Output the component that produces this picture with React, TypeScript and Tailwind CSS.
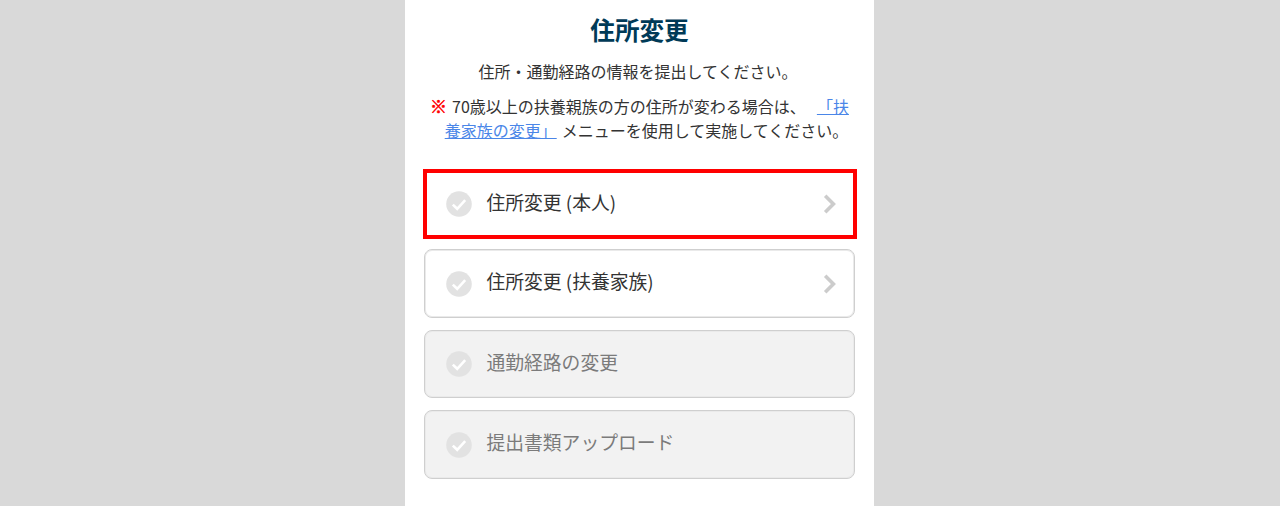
const font = { fontFamily: '"Noto Sans CJK JP", "Liberation Sans", sans-serif' };

interface MenuItemProps {
  label: string;
  active?: boolean;
  disabled?: boolean;
  className?: string;
}

function CheckCircle() {
  return (
    <svg width="26" height="26" viewBox="0 0 26 26" className="shrink-0">
      <circle cx="13" cy="13" r="12.8" fill="#e2e2e2" />
      <path d="M6.8 13.6l4.4 4.2 8-8.6" fill="none" stroke="#fff" strokeWidth="2.6" />
    </svg>
  );
}

function Chevron() {
  return (
    <svg width="14" height="20" viewBox="0 0 14 20" className="shrink-0">
      <path d="M2.2 1.8l8.2 8.2-8.2 8.2" fill="none" stroke="#cccccc" strokeWidth="3.6" />
    </svg>
  );
}

function MenuItem({ label, active, disabled, className }: MenuItemProps) {
  const edge = "border border-[#cfcfcf] rounded-lg shadow-[inset_0_0_0_1px_#eaeaea]";
  let box = `${edge} bg-white text-[#333333]`;
  if (active) box = "border-[4px] border-[#ff0000] bg-white text-[#333333]";
  if (disabled) box = `${edge} bg-[#f2f2f2] text-[#7b7b7b]`;
  return (
    <div className={`flex items-center justify-between ${box} ${className ?? ""}`}>
      <div className={`flex items-center ${active ? "pl-[19px]" : "pl-[21px]"}`}>
        <CheckCircle />
        <span className="ml-[14.5px] pb-[5px] text-[18.8px] leading-6">{label}</span>
      </div>
      {!disabled && (
        <div className={active ? "pr-[16px]" : "pr-[17px]"}>
          <Chevron />
        </div>
      )}
    </div>
  );
}

export default function App() {
  return (
    <div className="flex h-[506px] justify-center overflow-hidden bg-[#d9d9d9]" style={font}>
      <div className="ml-[-1px] w-[469px] bg-white px-[19px] [text-spacing-trim:space-all]">
        <h1 className="pt-[13px] text-center text-[24.6px] leading-8 font-bold text-[#003a57]">住所変更</h1>
        <p className="mt-[14px] ml-[-3px] text-center text-[16px] leading-6 text-[#333333]">
          住所・通勤経路の情報を提出してください。
        </p>
        <p className="mt-[11px] text-center text-[16px] leading-6 text-[#333333]">
          <span className="mr-[5px] text-[17px] leading-none font-bold text-[#ff0000] [-webkit-text-stroke:0.5px_#ff0000]">※</span>70歳以上の扶養親族の方の住所が変わる場合は、
          <a className="ml-[11px] text-[#4a86e8] underline">「扶</a>
          <br />
          <a className="ml-[14px] text-[#4a86e8] underline">養家族の変更」</a>
          <span className="ml-[5px]">メニューを使用して実施してください。</span>
        </p>
        <MenuItem className="mt-[27px] ml-[-1px] h-[70px] w-[434px]" label="住所変更 (本人)" active />
        <MenuItem className="mt-[10px] h-[69px] w-[431px]" label="住所変更 (扶養家族)" />
        <MenuItem className="mt-[12px] h-[68px] w-[431px]" label="通勤経路の変更" disabled />
        <MenuItem className="mt-[12px] h-[69px] w-[431px]" label="提出書類アップロード" disabled />
      </div>
    </div>
  );
}
